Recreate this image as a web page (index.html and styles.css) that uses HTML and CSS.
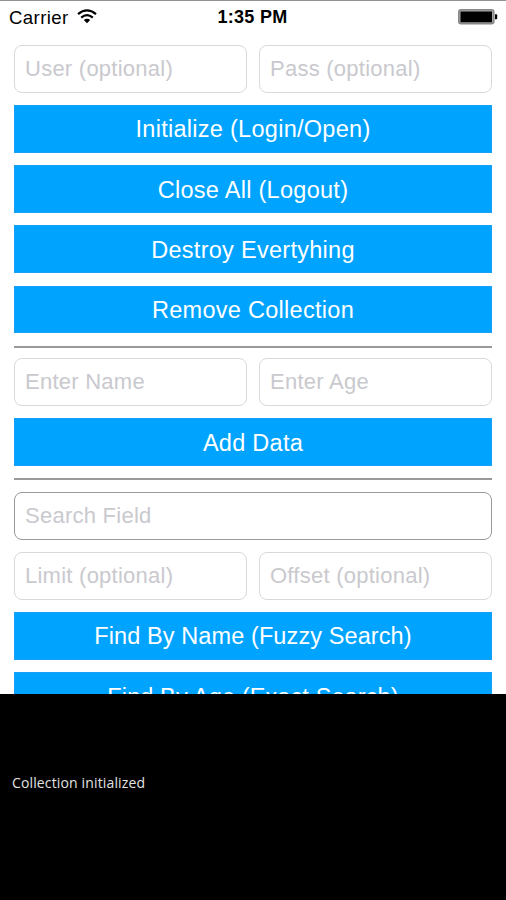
FILE: index.html
```html
<!DOCTYPE html>
<html lang="en">
<head>
<meta charset="utf-8">
<title>Collection demo</title>
<link rel="stylesheet" href="styles.css">
</head>
<body>
<div class="phone">
  <header class="status">
    <div class="carrier"><span>Carrier</span>
      <svg class="wifi" width="20" height="15" viewBox="0 0 20 15"><g fill="none" stroke="#000" stroke-width="2.2"><path d="M1 5.1Q10-2.4 19 5.1"/><path d="M4.2 8.6Q10 3.8 15.8 8.6"/></g><path d="M6.8 11Q10 8.3 13.2 11L10 14.2Z"/></svg>
    </div>
    <div class="time">1:35 PM</div>
    <svg class="battery" width="40" height="16" viewBox="0 0 40 16"><rect x=".8" y=".8" width="35" height="14" rx="2.2" fill="#aaa" stroke="#888" stroke-width="1.6"/><rect x="2.5" y="2.5" width="31.5" height="10.8"/><path d="M37 5.2h1.2q1 0 1 1v3q0 1-1 1H37z"/></svg>
  </header>
  <main class="form">
    <div class="row"><div class="field"><span>User (optional)</span></div><div class="field"><span>Pass (optional)</span></div></div>
    <button class="btn"><span>Initialize (Login/Open)</span></button>
    <button class="btn"><span>Close All (Logout)</span></button>
    <button class="btn"><span>Destroy Evertyhing</span></button>
    <button class="btn"><span>Remove Collection</span></button>
    <div class="rule"></div>
    <div class="row"><div class="field"><span>Enter Name</span></div><div class="field"><span>Enter Age</span></div></div>
    <button class="btn"><span>Add Data</span></button>
    <div class="rule second"></div>
    <div class="row"><div class="field dark"><span>Search Field</span></div></div>
    <div class="row"><div class="field"><span>Limit (optional)</span></div><div class="field"><span>Offset (optional)</span></div></div>
    <button class="btn find"><span>Find By Name (Fuzzy Search)</span></button>
    <button class="btn find"><span>Find By Age (Exact Search)</span></button>
  </main>
  <section class="console"><span>Collection initialized</span></section>
</div>
</body>
</html>
```
FILE: styles.css
```css
* { box-sizing: border-box; }
body { margin: 0; background: #fff; font-family: "Liberation Sans", Arial, sans-serif; }
.phone { width: 506px; height: 900px; display: flex; flex-direction: column; overflow: hidden; border-top: 1px solid #929292; }
.status { height: 44.2px; flex: none; display: grid; grid-template-columns: 1fr auto 1fr; padding: 0 8px 0 9px; color: #000; font-size: 18.6px; line-height: 33px; }
.carrier { display: flex; gap: 8px; letter-spacing: .4px; }
.wifi { margin-top: 8px; }
.time { font-weight: bold; font-size: 18px; letter-spacing: .3px; margin-left: -2px; }
.battery { justify-self: end; margin-top: 8px; }
.form { height: 648.5px; flex: none; overflow: hidden; padding: 0 14px; display: flex; flex-direction: column; gap: 12.7px; }
.row { display: flex; gap: 12px; height: 47.4px; flex: none; }
.field { flex: 1; border: 1px solid #d9d9db; border-radius: 8px; padding-left: 10px; color: #c9c9ce; font-size: 22px; line-height: 46px; letter-spacing: .25px; white-space: nowrap; }
.dark { border-color: #999; }
.btn { height: 47.4px; flex: none; border: 1px solid #18a0f8; border-radius: 0; background: #00a4ff; color: #fff; padding: 1px 0 0; font: 23.5px/44px "Liberation Sans", Arial, sans-serif; letter-spacing: .28px; }
.find { letter-spacing: .1px; }
.rule { height: 2px; flex: none; background: #999; margin-bottom: -2px; }
.second { margin-bottom: -1px; }
.console { flex: 1; background: #000; color: #e2e2e2; padding: 78px 12px 0; font: 14px/22px "Open Sans", "Noto Sans", sans-serif; letter-spacing: .14px; }
```
